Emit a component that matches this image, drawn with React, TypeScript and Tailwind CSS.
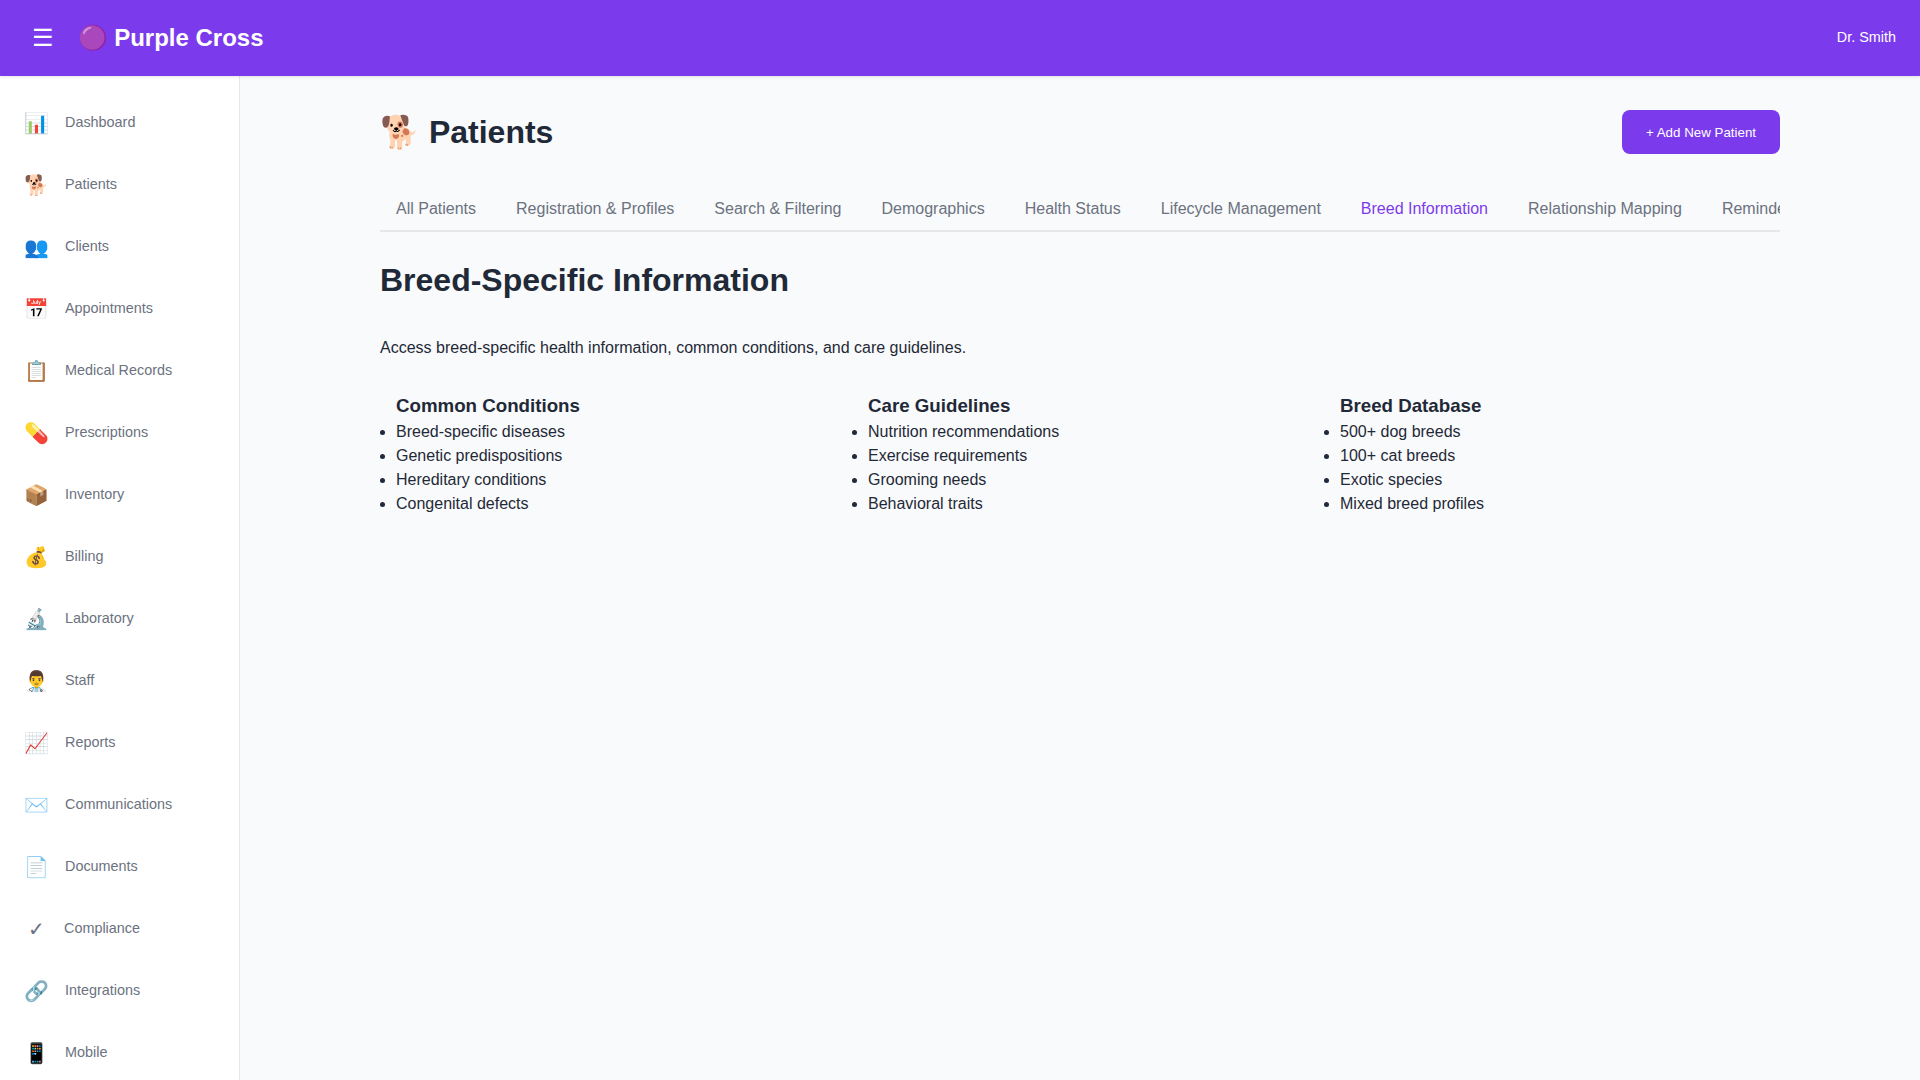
const navItems = [
  { icon: "📊", label: "Dashboard" },
  { icon: "🐕", label: "Patients" },
  { icon: "👥", label: "Clients" },
  { icon: "📅", label: "Appointments" },
  { icon: "📋", label: "Medical Records" },
  { icon: "💊", label: "Prescriptions" },
  { icon: "📦", label: "Inventory" },
  { icon: "💰", label: "Billing" },
  { icon: "🔬", label: "Laboratory" },
  { icon: "👨‍⚕️", label: "Staff" },
  { icon: "📈", label: "Reports" },
  { icon: "✉️", label: "Communications" },
  { icon: "📄", label: "Documents" },
  { icon: "✓", label: "Compliance" },
  { icon: "🔗", label: "Integrations" },
  { icon: "📱", label: "Mobile" },
];

const tabs = [
  "All Patients",
  "Registration & Profiles",
  "Search & Filtering",
  "Demographics",
  "Health Status",
  "Lifecycle Management",
  "Breed Information",
  "Relationship Mapping",
  "Reminders",
];

const sections = [
  {
    title: "Common Conditions",
    items: ["Breed-specific diseases", "Genetic predispositions", "Hereditary conditions", "Congenital defects"],
  },
  {
    title: "Care Guidelines",
    items: ["Nutrition recommendations", "Exercise requirements", "Grooming needs", "Behavioral traits"],
  },
  {
    title: "Breed Database",
    items: ["500+ dog breeds", "100+ cat breeds", "Exotic species", "Mixed breed profiles"],
  },
];

function TopBar() {
  return (
    <header className="relative z-10 flex h-[76px] shrink-0 items-center justify-between bg-[#7c3aed] pl-8 pr-6 text-white shadow-[0_1px_3px_rgba(0,0,0,0.1)]">
      <div className="flex items-center gap-[23.5px]">
        <button className="text-2xl leading-none">☰</button>
        <div className="text-2xl font-bold">🟣 Purple Cross</div>
      </div>
      <div className="mb-px text-[14.4px]">Dr. Smith</div>
    </header>
  );
}

function Sidebar() {
  return (
    <aside className="w-[240px] shrink-0 overflow-hidden border-r border-[#e5e7eb] bg-white py-4">
      <nav>
        {navItems.map((item) => (
          <a key={item.label} className="flex h-[62px] items-center gap-4 px-6 text-[14.4px] text-[#6b7280]">
            <span className="min-w-6 text-center text-xl">{item.icon}</span>
            <span>{item.label}</span>
          </a>
        ))}
      </nav>
    </aside>
  );
}

export default function App() {
  return (
    <div className="flex h-screen flex-col overflow-hidden bg-[#f9fafb] font-['Liberation_Sans',sans-serif] text-[#1f2937]">
      <TopBar />
      <div className="flex min-h-0 flex-1">
        <Sidebar />
        <main className="min-w-0 flex-1 overflow-hidden p-8">
          <div className="mx-auto max-w-[1400px]">
            <div className="mb-7 flex items-center justify-between">
              <h1 className="text-[32px] font-bold">🐕 Patients</h1>
              <button className="h-11 rounded-lg bg-[#7c3aed] px-6 pt-0.5 text-[13.333px] text-white">+ Add New Patient</button>
            </div>
            <div className="mb-6 flex gap-2 overflow-hidden border-b-2 border-[#e5e7eb]">
              {tabs.map((tab) => (
                <button
                  key={tab}
                  className={`shrink-0 whitespace-nowrap px-4 pb-[9px] pt-[13px] text-base ${tab === "Breed Information" ? "text-[#7c3aed]" : "text-[#6b7280]"}`}
                >
                  {tab}
                </button>
              ))}
            </div>
            <h2 className="mb-8 text-[32px] font-bold">Breed-Specific Information</h2>
            <p className="mb-8 text-base">Access breed-specific health information, common conditions, and care guidelines.</p>
            <div className="grid grid-cols-3 gap-4">
              {sections.map((section) => (
                <div key={section.title} className="pl-4">
                  <h3 className="text-[18.72px] font-bold">{section.title}</h3>
                  <ul className="list-disc">
                    {section.items.map((item) => (
                      <li key={item}>{item}</li>
                    ))}
                  </ul>
                </div>
              ))}
            </div>
          </div>
        </main>
      </div>
    </div>
  );
}
